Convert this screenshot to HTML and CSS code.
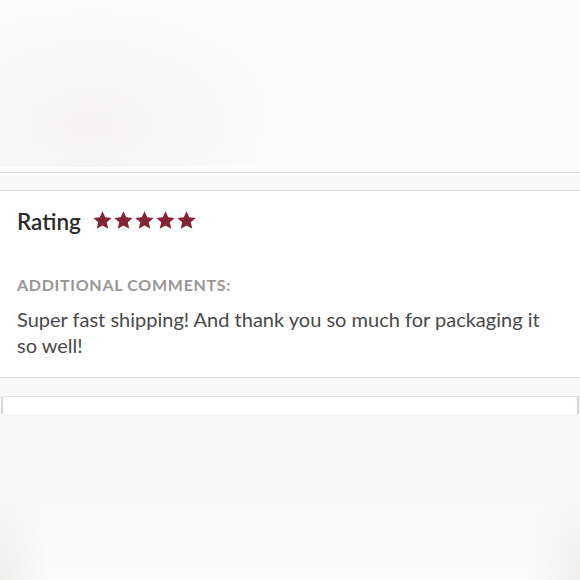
FILE: index.html
```html
<!DOCTYPE html>
<html>
<head>
<meta charset="utf-8">
<link rel="stylesheet" href="styles.css">
</head>
<body>
<div class="blur-top"></div>
<div class="spacer"></div>
<div class="band"></div>
<section class="card">
  <div class="rating-row">
    <h2 class="rating-label">Rating</h2>
    <div class="stars">
      <svg class="star" viewBox="0 0 24 24"><path d="M12 1.5l3.1 6.9 7.4.7-5.6 5 1.7 7.4L12 17.6l-6.6 3.9 1.7-7.4-5.6-5 7.4-.7z"/></svg>
      <svg class="star" viewBox="0 0 24 24"><path d="M12 1.5l3.1 6.9 7.4.7-5.6 5 1.7 7.4L12 17.6l-6.6 3.9 1.7-7.4-5.6-5 7.4-.7z"/></svg>
      <svg class="star" viewBox="0 0 24 24"><path d="M12 1.5l3.1 6.9 7.4.7-5.6 5 1.7 7.4L12 17.6l-6.6 3.9 1.7-7.4-5.6-5 7.4-.7z"/></svg>
      <svg class="star" viewBox="0 0 24 24"><path d="M12 1.5l3.1 6.9 7.4.7-5.6 5 1.7 7.4L12 17.6l-6.6 3.9 1.7-7.4-5.6-5 7.4-.7z"/></svg>
      <svg class="star" viewBox="0 0 24 24"><path d="M12 1.5l3.1 6.9 7.4.7-5.6 5 1.7 7.4L12 17.6l-6.6 3.9 1.7-7.4-5.6-5 7.4-.7z"/></svg>
    </div>
  </div>
  <h3 class="comments-label">ADDITIONAL COMMENTS:</h3>
  <p class="comment">Super fast shipping! And thank you so much for packaging it so well!</p>
</section>
<div class="band band-bottom"></div>
<div class="next-card"></div>
<div class="blur-bottom"></div>
</body>
</html>
```

FILE: styles.css
```css
html, body {
  margin: 0;
  padding: 0;
  background: #fdfcfc;
  font-family: Lato, "Open Sans", sans-serif;
}
.blur-top {
  height: 167px;
  background:
    radial-gradient(ellipse 200px 120px at 90px 125px, #f4f2f3 0%, rgba(246,244,245,0.6) 50%, rgba(252,251,251,0) 100%),
    linear-gradient(180deg, #fcfbfb 0%, #fdfcfc 100%);
}
.spacer {
  height: 5px;
  background: #fefefe;
}
.band {
  height: 17px;
  background: #faf9f9;
  border-top: 1px solid #e4e1e1;
  border-bottom: 1px solid #e4e1e1;
}
.band-bottom {
  height: 18px;
}
.card {
  background: #ffffff;
  padding: 16px 17px 16px;
  height: 154px;
}
.rating-row {
  display: flex;
  align-items: center;
  gap: 11px;
  height: 28px;
}
.rating-label {
  margin: 0;
  font-size: 22.5px;
  font-weight: 600;
  color: #2b2b2b;
}
.stars {
  display: flex;
  gap: 0;
  margin-top: -1px;
}
.star {
  width: 21px;
  height: 21px;
  fill: #842535;
}
.comments-label {
  margin: 40px 0 0;
  font-size: 16px;
  font-weight: 700;
  letter-spacing: 0.7px;
  color: #9a9695;
  line-height: 20px;
}
.comment {
  margin: 11px 0 0;
  font-size: 20px;
  line-height: 26px;
  color: #4a4848;
}
.next-card {
  height: 17px;
  background: #ffffff;
  border-left: 2px solid #d8d6d6;
  border-right: 2px solid #d8d6d6;
  margin: 0 1px;
}
.blur-bottom {
  height: 167px;
  background:
    radial-gradient(ellipse 50px 120px at 0px 167px, #f0efee 0%, rgba(248,247,247,0) 100%),
    radial-gradient(ellipse 50px 120px at 580px 167px, #f0efee 0%, rgba(248,247,247,0) 100%),
    linear-gradient(180deg, #f8f7f7 0%, #faf9f9 50%, #fbfbfb 100%);
}
```
